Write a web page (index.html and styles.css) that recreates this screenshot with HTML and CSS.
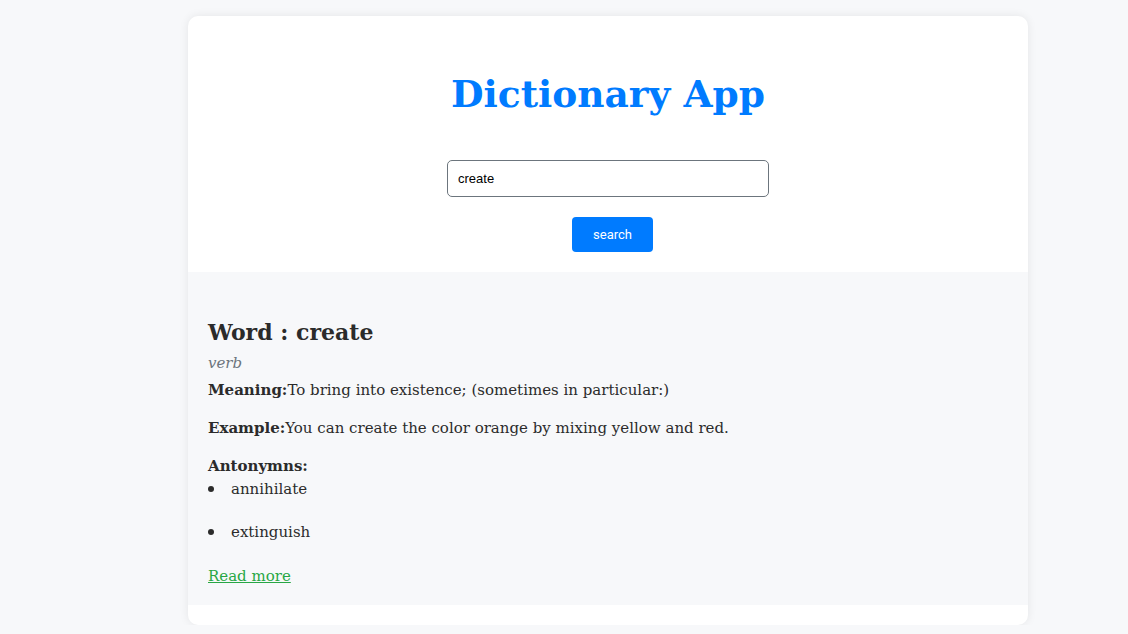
FILE: index.html
```html
<!DOCTYPE html>
<html>
<head>
<meta charset="utf-8">
<link rel="stylesheet" href="styles.css">
</head>
<body>
<div class="card">
  <div class="top">
    <h1 class="title">Dictionary App</h1>
    <form class="search-form">
      <input class="search-input" type="text" value="create">
      <button class="search-btn" type="button">search</button>
    </form>
  </div>
  <div class="result">
    <h2 class="word">Word : create</h2>
    <p class="pos">verb</p>
    <p class="line"><b>Meaning:</b>To bring into existence; (sometimes in particular:)</p>
    <p class="line ex"><b>Example:</b>You can create the color orange by mixing yellow and red.</p>
    <p class="ant-label"><b>Antonymns:</b></p>
    <ul class="ant-list">
      <li>annihilate</li>
      <li>extinguish</li>
    </ul>
    <a class="more" href="#">Read more</a>
  </div>
</div>
</body>
</html>
```
FILE: styles.css
```css
html, body { margin: 0; padding: 0; }
body {
  background: #f7f8fa;
  font-family: "DejaVu Serif", serif;
  color: #2b2b2b;
}
.card {
  width: 840px;
  margin: 16px 0 0 188px;
  background: #fff;
  border-radius: 10px;
  box-shadow: 0 0 10px rgba(0,0,0,0.08);
  padding-bottom: 20px;
  overflow: hidden;
}
.top {
  display: flex;
  flex-direction: column;
  align-items: center;
  padding: 48px 0 20px;
}
.title {
  margin: 0;
  color: #007bff;
  font-size: 37.5px;
  font-weight: bold;
  line-height: 60px;
}
.search-form {
  display: flex;
  flex-direction: column;
  align-items: center;
  margin-top: 36px;
  gap: 20px;
}
.search-input {
  box-sizing: border-box;
  width: 322px;
  height: 37px;
  border: 1px solid #6c757d;
  border-radius: 5px;
  padding: 0 10px;
  font-family: "Liberation Sans", Arial, sans-serif;
  font-size: 13px;
  color: #000;
}
.search-btn {
  width: 81px;
  height: 35px;
  margin-left: 9px;
  border: none;
  border-radius: 4px;
  background: #007bff;
  color: #fff;
  font-family: Roboto, "Liberation Sans", sans-serif;
  font-size: 13px;
}
.result {
  background: #f7f8fa;
  padding: 44px 20px 17px;
}
.word {
  margin: 0;
  font-size: 22px;
  line-height: 32px;
  font-weight: bold;
}
.pos {
  margin: 5px 0 0;
  font-style: italic;
  color: #6c757d;
  font-size: 15px;
  line-height: 20px;
}
.line {
  margin: 5px 0 0;
  font-size: 15px;
  line-height: 24px;
}
.ex { margin-top: 14px; }
.ant-label {
  margin: 16px 0 0;
  font-size: 15px;
  line-height: 20px;
}
.ant-list {
  margin: 1px 0 0;
  padding: 0;
  list-style: none;
  font-size: 15px;
}
.ant-list li {
  display: flex;
  align-items: center;
  line-height: 24px;
  margin-bottom: 19px;
}
.ant-list li::before {
  content: "";
  width: 6px;
  height: 6px;
  border-radius: 50%;
  background: #2b2b2b;
  margin: 0 17px 0 0;
  flex: none;
}
.ant-list li:last-child { margin-bottom: 20px; }
.more {
  color: #28a745;
  font-size: 15px;
  line-height: 24px;
}
```
